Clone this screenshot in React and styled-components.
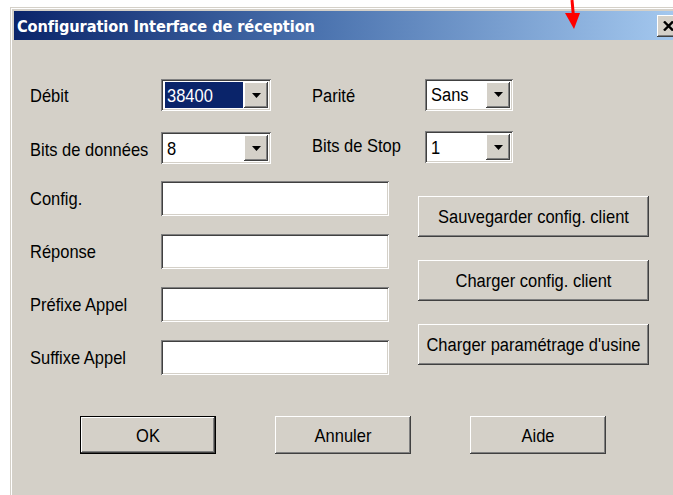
import React from "react";
import styled, { createGlobalStyle, css } from "styled-components";

const FACE = "#d4d0c8";
const SHADOW = "#808080";
const DARK = "#404040";

const GlobalStyle = createGlobalStyle`
  html, body {
    margin: 0;
    padding: 0;
    background: #fff;
    overflow: hidden;
  }
  body {
    font-family: "Liberation Sans", Arial, sans-serif;
  }
`;

const Page = styled.div`
  position: relative;
  width: 673px;
  height: 495px;
  overflow: hidden;
  padding: 7px 0 0 10px;
  box-sizing: border-box;
`;

const Window = styled.div`
  width: 673px;
  height: 520px;
  box-sizing: border-box;
  background: ${FACE};
  border-top: 1px solid ${FACE};
  border-left: 1px solid ${FACE};
  box-shadow: inset 1px 1px #fff;
  padding: 3px 0 0 3px;
  display: flex;
  flex-direction: column;
`;

const TitleBar = styled.div`
  height: 29px;
  display: flex;
  align-items: center;
  justify-content: space-between;
  padding: 0 4px 0 3px;
  background: linear-gradient(to right, #0a246a 0%, #4a72ae 45%, #a6caf0 100%);
`;

const Stretch = styled.span`
  display: inline-block;
  transform: scaleY(1.12);
  white-space: nowrap;
`;

const Title = styled(Stretch)`
  color: #fff;
  font-family: "DejaVu Sans", Verdana, sans-serif;
  font-weight: bold;
  font-size: 14.6px;
  letter-spacing: -0.1px;
`;

const raised = css`
  background: ${FACE};
  box-shadow: inset -1px -1px ${DARK}, inset 1px 1px #fff,
    inset -2px -2px ${SHADOW}, inset 2px 2px ${FACE};
`;

const sunken = css`
  background: #fff;
  box-shadow: inset 1px 1px ${SHADOW}, inset -1px -1px #fff,
    inset 2px 2px ${DARK}, inset -2px -2px ${FACE};
`;

const CloseButton = styled.div`
  ${raised};
  width: 22px;
  height: 22px;
  display: flex;
  align-items: center;
  justify-content: center;
`;

const Body = styled.div`
  flex: 1;
  display: flex;
  flex-direction: column;
  padding: 39px 0 0 16px;
`;

const Row = styled.div`
  display: flex;
  align-items: center;
  height: 32px;
  margin-top: ${(p) => p.$top || 0}px;
`;

const Label = styled.div`
  width: ${(p) => p.$width}px;
  margin-left: ${(p) => p.$offset || 0}px;
  margin-top: ${(p) => p.$lift || 0}px;
  font-size: 16.5px;
  color: #000;
  flex-shrink: 0;
`;

const ComboBox = styled.div`
  ${sunken};
  width: ${(p) => p.$width}px;
  height: 32px;
  box-sizing: border-box;
  padding: 3px 3px 3px 4px;
  display: flex;
  align-items: stretch;
  margin-top: ${(p) => p.$nudge || 0}px;
`;

const ComboValue = styled.div`
  flex: 1;
  display: flex;
  align-items: center;
  padding-left: 2px;
  font-size: 16.5px;
  color: ${(p) => (p.$selected ? "#fff" : "#000")};
  background: ${(p) => (p.$selected ? "#0a246a" : "transparent")};
  margin-right: 1px;
`;

const DropButton = styled.div`
  ${raised};
  width: 24px;
  display: flex;
  align-items: center;
  justify-content: center;
`;

const Lower = styled.div`
  display: flex;
  margin-top: 17px;
`;

const FieldColumn = styled.div`
  display: flex;
  flex-direction: column;
  gap: 18px;
`;

const FieldRow = styled.div`
  display: flex;
  align-items: center;
`;

const TextField = styled.div`
  ${sunken};
  width: 228px;
  height: 35px;
`;

const ActionColumn = styled.div`
  display: flex;
  flex-direction: column;
  gap: 23px;
  margin: 15px 0 0 29px;
`;

const Button = styled.div`
  ${raised};
  width: ${(p) => p.$width}px;
  height: ${(p) => p.$height}px;
  display: flex;
  align-items: center;
  justify-content: center;
  font-size: 16.5px;
  color: #000;
  box-sizing: border-box;
  ${(p) =>
    p.$default &&
    css`
      border: 1px solid #000;
    `}
`;

const Footer = styled.div`
  display: flex;
  gap: 59px;
  margin: 41px 0 0 50px;
`;

const Pointer = styled.svg`
  position: absolute;
  left: 560px;
  top: 0;
`;

function Combo({ width, value, selected, nudge }) {
  return (
    <ComboBox $width={width} $nudge={nudge}>
      <ComboValue $selected={selected}>
        <Stretch>{value}</Stretch>
      </ComboValue>
      <DropButton>
        <svg width="9" height="5" viewBox="0 0 9 5">
          <path d="M0 0h9L4.5 5z" fill="#000" />
        </svg>
      </DropButton>
    </ComboBox>
  );
}

const fields = ["Config.", "Réponse", "Préfixe Appel", "Suffixe Appel"];
const actions = [
  "Sauvegarder config. client",
  "Charger config. client",
  "Charger paramétrage d'usine",
];

export default function App() {
  return (
    <>
      <GlobalStyle />
      <Page>
        <Window>
          <TitleBar>
            <Title>Configuration Interface de réception</Title>
            <CloseButton>
              <svg width="11" height="10" viewBox="0 0 11 10">
                <path
                  d="M1 0.5 L10 9.5 M10 0.5 L1 9.5"
                  stroke="#000"
                  strokeWidth="2.4"
                  fill="none"
                />
              </svg>
            </CloseButton>
          </TitleBar>
          <Body>
            <Row>
              <Label $width={131}>
                <Stretch>Débit</Stretch>
              </Label>
              <Combo width={110} value="38400" selected />
              <Label $width={113} $offset={41}>
                <Stretch>Parité</Stretch>
              </Label>
              <Combo width={88} value="Sans" nudge={-1} />
            </Row>
            <Row $top={21}>
              <Label $width={131} $lift={2}>
                <Stretch>Bits de données</Stretch>
              </Label>
              <Combo width={110} value="8" />
              <Label $width={113} $offset={41} $lift={-6}>
                <Stretch>Bits de Stop</Stretch>
              </Label>
              <Combo width={88} value="1" nudge={-2} />
            </Row>
            <Lower>
              <FieldColumn>
                {fields.map((name) => (
                  <FieldRow key={name}>
                    <Label $width={131}>
                      <Stretch>{name}</Stretch>
                    </Label>
                    <TextField />
                  </FieldRow>
                ))}
              </FieldColumn>
              <ActionColumn>
                {actions.map((name) => (
                  <Button key={name} $width={231} $height={41}>
                    <Stretch>{name}</Stretch>
                  </Button>
                ))}
              </ActionColumn>
            </Lower>
            <Footer>
              <Button $width={136} $height={38} $default>
                <Stretch>OK</Stretch>
              </Button>
              <Button $width={136} $height={38}>
                <Stretch>Annuler</Stretch>
              </Button>
              <Button $width={136} $height={38}>
                <Stretch>Aide</Stretch>
              </Button>
            </Footer>
          </Body>
        </Window>
        <Pointer width="25" height="32" viewBox="0 0 25 32">
          <path d="M12 0 L13.5 17" stroke="#f00" strokeWidth="3" fill="none" />
          <path d="M5 13 L20 13 L14 29 Z" fill="#f00" />
        </Pointer>
      </Page>
    </>
  );
}
